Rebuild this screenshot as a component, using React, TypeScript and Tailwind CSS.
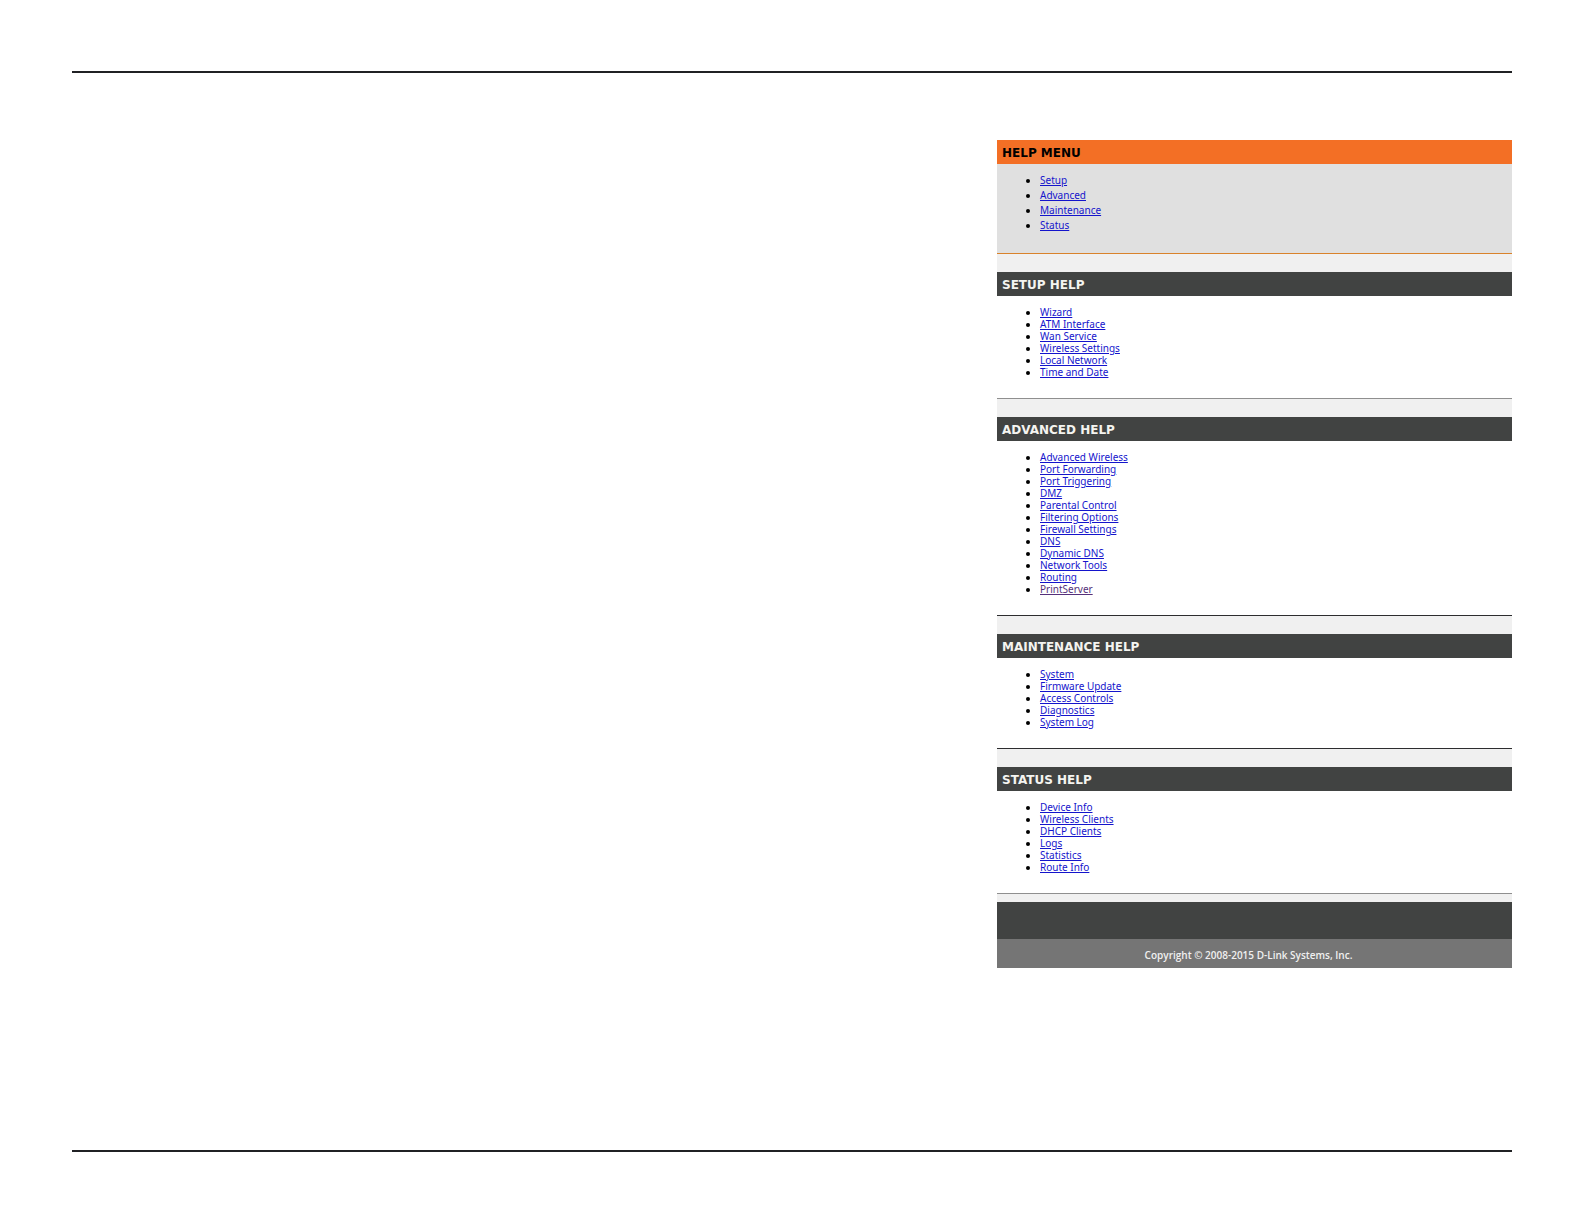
import React from "react";

const menu = ["Setup", "Advanced", "Maintenance", "Status"];

const sections = [
  {
    id: "setup",
    title: "Setup Help",
    line: "border-[#8f8f8f]",
    links: [
      "Wizard",
      "ATM Interface",
      "Wan Service",
      "Wireless Settings",
      "Local Network",
      "Time and Date",
    ],
  },
  {
    id: "advanced",
    title: "Advanced Help",
    line: "border-[#2d2d2f]",
    links: [
      "Advanced Wireless",
      "Port Forwarding",
      "Port Triggering",
      "DMZ",
      "Parental Control",
      "Filtering Options",
      "Firewall Settings",
      "DNS",
      "Dynamic DNS",
      "Network Tools",
      "Routing",
      "PrintServer",
    ],
  },
  {
    id: "maintenance",
    title: "Maintenance Help",
    line: "border-[#2d2d2f]",
    links: [
      "System",
      "Firmware Update",
      "Access Controls",
      "Diagnostics",
      "System Log",
    ],
  },
  {
    id: "status",
    title: "Status Help",
    line: "border-[#8f8f8f]",
    links: [
      "Device Info",
      "Wireless Clients",
      "DHCP Clients",
      "Logs",
      "Statistics",
      "Route Info",
    ],
  },
];

// the one page that has already been opened
const visited = "PrintServer";

const HelpSection = ({ id, title, line, links }: any) => {
  return (
    <section id={id}>
      <h2 className="h-6 px-[5px] bg-[#414342] text-[#f4f4f0] text-[12px] leading-[26px] font-bold uppercase font-['DejaVu_Sans',sans-serif]">
        {title}
      </h2>
      <ul className={`bg-white list-disc pl-[43px] pt-[10px] pb-5 border-b ${line}`}>
        {links.map((e: string) => (
          <li key={e} className="leading-[12px]">
            <a
              href={`#${id}`}
              className={
                e === visited
                  ? "underline text-[#55307a]"
                  : "underline text-[#1414cc]"
              }
            >
              {e}
            </a>
          </li>
        ))}
      </ul>
    </section>
  );
};

export default function App() {
  return (
    <div className="min-h-screen flex flex-col bg-white px-[72px] pt-[71px] pb-[72px]">
      <main className="flex-1 grid grid-cols-[925fr_515fr] items-start border-y-2 border-[#202124] pt-[67px] pb-10">
        <div className="col-start-2 bg-[#f0f0f0] text-black text-[10px] font-['Noto_Sans',sans-serif]">
          <nav className="mb-[18px]">
            <h1 className="h-6 px-[5px] bg-[#f36f25] text-[12px] leading-[26px] font-bold uppercase font-['DejaVu_Sans',sans-serif]">
              Help Menu
            </h1>
            <ul className="bg-[#e0e0e0] list-disc pl-[43px] pt-[9px] pb-5 border-b border-[#d9822b]">
              {menu.map((e) => (
                <li key={e} className="leading-[15px]">
                  <a
                    href={`#${e.toLowerCase()}`}
                    className="underline text-[#1414cc]"
                  >
                    {e}
                  </a>
                </li>
              ))}
            </ul>
          </nav>

          <div className="flex flex-col gap-[18px]">
            {sections.map((e) => (
              <HelpSection key={e.id} {...e} />
            ))}
          </div>

          <footer className="mt-2">
            <div className="h-[37px] bg-[#414342]"></div>
            <p className="h-[29px] pr-3 bg-[#757575] text-[#f0f0f0] text-center leading-[32px] font-semibold font-['Open_Sans',sans-serif]">
              Copyright © 2008-2015 D-Link Systems, Inc.
            </p>
          </footer>
        </div>
      </main>
    </div>
  );
}
